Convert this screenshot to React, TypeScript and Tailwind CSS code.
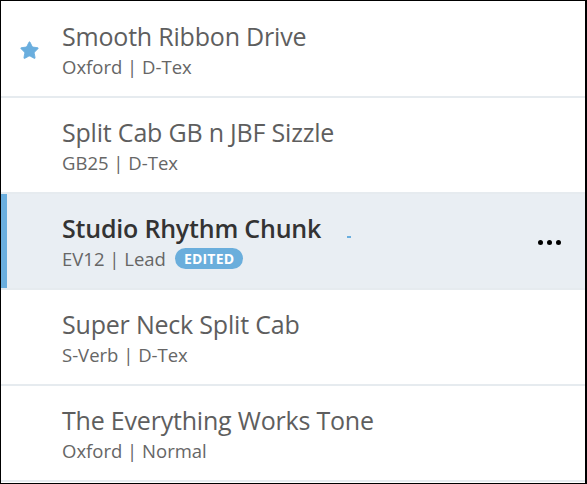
import { Star } from 'lucide-react';

type Preset = { name: string; sub: string; fav?: boolean; selected?: boolean; edited?: boolean };

const presets: Preset[] = [
  { name: 'Smooth Ribbon Drive', sub: 'Oxford | D-Tex', fav: true },
  { name: 'Split Cab GB n JBF Sizzle', sub: 'GB25 | D-Tex' },
  { name: 'Studio Rhythm Chunk', sub: 'EV12 | Lead', selected: true, edited: true },
  { name: 'Super Neck Split Cab', sub: 'S-Verb | D-Tex' },
  { name: 'The Everything Works Tone', sub: 'Oxford | Normal' },
];

function Row({ p }: { p: Preset }) {
  return (
    <div
      className={`relative flex items-center h-[96px] border-b-2 border-[#e6ebef] ${
        p.selected ? 'bg-[#e9eef3]' : 'bg-white'
      }`}
    >
      {p.selected && <div className="absolute left-0 top-0 bottom-0 w-[6px] bg-[#6aaede]" />}
      <div className="w-[57px] flex justify-center">
        {p.fav && <Star size={21} className="fill-[#6aaede] text-[#6aaede] mt-[2px]" strokeWidth={1} />}
      </div>
      <div className="flex-1 min-w-0 ml-[4px] mt-[2px]">
        <div className="flex items-center">
          <div
            className={`text-[25px] leading-[30px] tracking-[-0.2px] ${
              p.selected ? 'font-semibold text-[#333]' : 'text-[#5e5e5e]'
            }`}
          >
            {p.name}
          </div>
          {p.selected && <span className="ml-[26px] mt-[18px] w-[4px] h-[2px] bg-[#6aaede]" />}
        </div>
        <div className="flex items-center mt-[3px] text-[18.5px] leading-[26px] text-[#666]">
          {p.sub}
          {p.edited && (
            <span className="ml-[9px] rounded-full bg-[#6aaedc] px-[9px] h-[21px] flex items-center text-[14px] font-bold tracking-[0.2px] text-white">
              EDITED
            </span>
          )}
        </div>
      </div>
      {p.selected && (
        <div className="flex gap-[4px] mr-[24px] mt-[2px]">
          <span className="w-[5px] h-[5px] rounded-full bg-black" />
          <span className="w-[5px] h-[5px] rounded-full bg-black" />
          <span className="w-[5px] h-[5px] rounded-full bg-black" />
        </div>
      )}
    </div>
  );
}

export default function App() {
  return (
    <div
      className="w-[587px] h-[484px] border-l border-t border-b border-r-2 border-black bg-white overflow-hidden pt-[1px]"
      style={{ fontFamily: '"Open Sans", sans-serif' }}
    >
      {presets.map((p) => (
        <Row key={p.name} p={p} />
      ))}
    </div>
  );
}
